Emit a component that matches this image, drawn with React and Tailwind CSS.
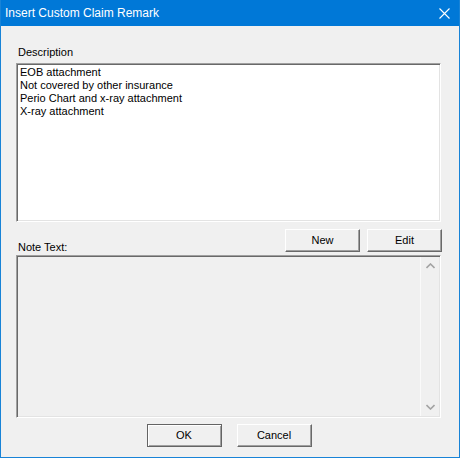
import React from 'react';

const FONT = { fontFamily: '"Liberation Sans", Arial, sans-serif' };

function RaisedButton({ label, isDefault }) {
  return (
    <button
      type="button"
      className={`h-[23px] w-[75px] flex items-center justify-center bg-[#f0f0f0] text-[11px] text-black ${
        isDefault
          ? 'border border-[#646464] shadow-[inset_1px_1px_0_#ffffff,inset_-1px_-1px_0_#a0a0a0]'
          : 'border-t border-l border-white border-r border-b border-r-[#696969] border-b-[#696969] shadow-[inset_-1px_-1px_0_#a0a0a0]'
      }`}
    >
      {label}
    </button>
  );
}

export default function App() {
  const remarks = [
    'EOB attachment',
    'Not covered by other insurance',
    'Perio Chart and x-ray attachment',
    'X-ray attachment',
  ];

  return (
    <div className="w-[460px] h-[458px] flex flex-col bg-[#f0f0f0] border-l border-r border-b border-[#1883d7] overflow-hidden" style={FONT}>
      {/* Title bar */}
      <div className="h-[26px] -mx-px bg-[#0078d7] flex items-center justify-between pl-[5px] pr-[10px] shrink-0">
        <span className="text-[12px] text-white leading-none">Insert Custom Claim Remark</span>
        <svg width="11" height="11" viewBox="0 0 11 11" className="mt-px">
          <path d="M0.5 0.5 L10.5 10.5 M10.5 0.5 L0.5 10.5" stroke="#ffffff" strokeWidth="1.1" />
        </svg>
      </div>

      <div className="flex flex-col pl-[15px] pr-[18px] text-[11px] text-black">
        <div className="mt-[20px] h-[17px] pl-[2px] leading-[13px]">Description</div>

        {/* Description list */}
        <div className="h-[159px] bg-white border-t border-l border-[#a0a0a0] border-r border-b border-r-white border-b-white shadow-[inset_1px_1px_0_#696969,inset_-1px_-1px_0_#e3e3e3] pt-[2px] pl-[3px]">
          {remarks.map((r) => (
            <div key={r} className="h-[13px] leading-[13px] whitespace-nowrap">{r}</div>
          ))}
        </div>

        {/* Label + buttons row */}
        <div className="flex items-end justify-between mt-[7px] h-[26px]">
          <div className="pl-[2px] leading-[13px] pb-[1px]">Note Text:</div>
          <div className="flex gap-[7px] self-start mr-[-1px]">
            <RaisedButton label="New" />
            <RaisedButton label="Edit" />
          </div>
        </div>

        {/* Note text box */}
        <div className="h-[163px] flex bg-[#f0f0f0] border-t border-l border-[#a0a0a0] border-r border-b border-r-white border-b-white shadow-[inset_1px_1px_0_#696969,inset_-1px_-1px_0_#e3e3e3]">
          <div className="flex-1" />
          <div className="w-[19px] mb-[1px] mr-[1px] mt-[1px] border-l border-[#fafafa] flex flex-col items-center justify-between py-[6px]">
            <svg width="9" height="6" viewBox="0 0 9 6">
              <path d="M0.5 5 L4.5 1 L8.5 5" fill="none" stroke="#a3a3a3" strokeWidth="1.6" />
            </svg>
            <svg width="9" height="6" viewBox="0 0 9 6">
              <path d="M0.5 1 L4.5 5 L8.5 1" fill="none" stroke="#a3a3a3" strokeWidth="1.6" />
            </svg>
          </div>
        </div>

        {/* Footer buttons */}
        <div className="flex justify-center gap-[15px] mt-[6px] pl-[1px]">
          <RaisedButton label="OK" isDefault />
          <RaisedButton label="Cancel" />
        </div>
      </div>
    </div>
  );
}
